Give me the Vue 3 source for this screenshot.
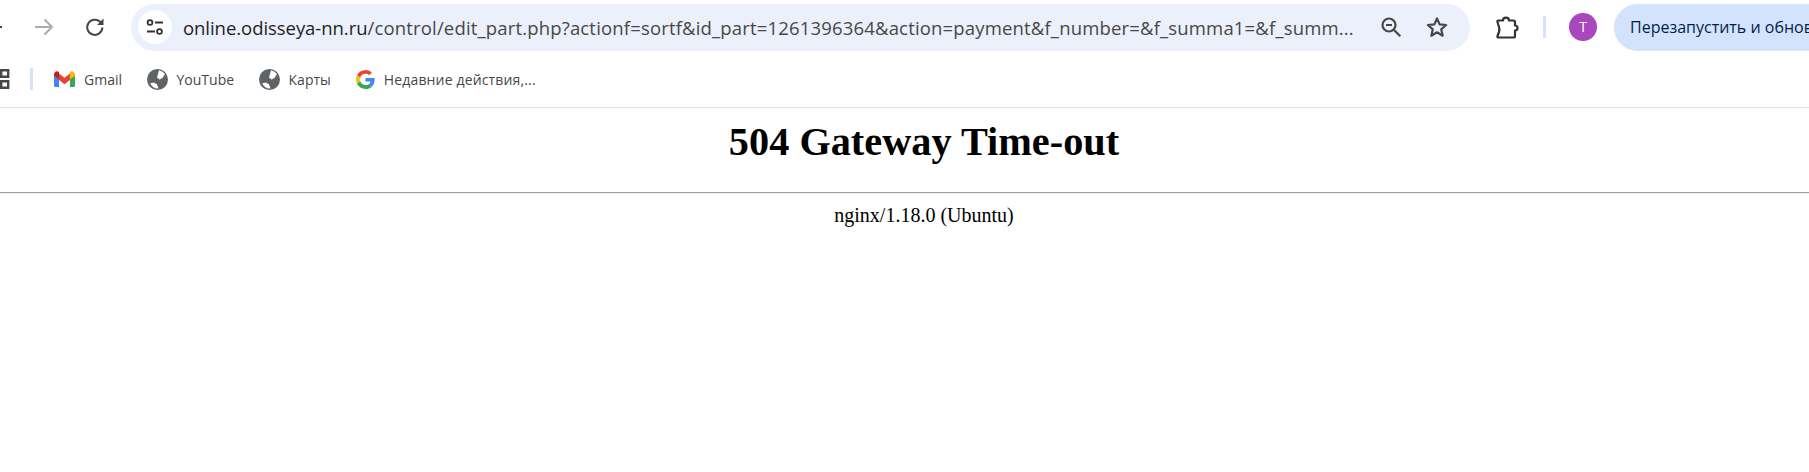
<template>
  <div class="window">
    <header class="toolbar">
      <svg class="back" width="20" height="20" viewBox="0 0 20 20"><path d="M19 10H3M9 4l-6 6 6 6" fill="none" stroke="#474747" stroke-width="2"/></svg>
      <svg class="forward" width="20" height="20" viewBox="0 0 20 20"><path d="M1 10h16M10.500 2.500l7.500 7.500-7.500 7.500" fill="none" stroke="#adadad" stroke-width="2"/></svg>
      <svg class="reload" width="22" height="22" viewBox="0 0 22 22"><path d="M18.400 11.500a7.600 7.600 0 1 1-2.300-5.700l2.300 2.200" fill="none" stroke="#474747" stroke-width="2"/><path d="M19.500 2.500v6.500h-6.500z" fill="#474747"/></svg>
      <div class="omnibox">
        <span class="tune">
          <svg width="20" height="20" viewBox="0 0 20 20" fill="none" stroke="#333" stroke-width="1.800"><circle cx="5" cy="5.500" r="2.400"/><path d="M10 5.500h8M2 14.500h8"/><circle cx="14.500" cy="14.500" r="2.400"/></svg>
        </span>
        <div class="url"><span class="host">online.odisseya-nn.ru</span>/control/edit_part.php?actionf=sortf&amp;id_part=1261396364&amp;action=payment&amp;f_number=&amp;f_summa1=&amp;f_summ...</div>
        <svg class="zoom" width="24" height="24" viewBox="0 0 24 24" fill="none" stroke="#474747" stroke-width="2.200"><circle cx="10" cy="10" r="6.500"/><path d="M7 10h6" stroke-width="2"/><path d="M14.800 14.800l6.500 6.500"/></svg>
        <svg class="star" width="24" height="24" viewBox="0 0 24 24"><path d="M12 3.400l2.600 6 6.500.6-4.900 4.300 1.500 6.400-5.700-3.400-5.700 3.400 1.500-6.400-4.900-4.300 6.500-.6z" fill="none" stroke="#474747" stroke-width="2.200" stroke-linejoin="round"/></svg>
      </div>
      <svg class="puzzle" width="26" height="26" viewBox="0 0 26 26"><path d="M4.500 6.500H9a3 2.800 0 0 1 6 0h4.500q1.500 0 1.500 1.500v3.500a2.500 2.500 0 0 1 0 5V22q0 1.500-1.500 1.500h-15q-1.500 0-1-1.500l1.500-4q.8-2.500 0-5L3.500 8q-.5-1.500 1-1.500z" fill="none" stroke="#333" stroke-width="2.200" stroke-linejoin="round"/></svg>
      <span class="sep"></span>
      <span class="avatar">T</span>
      <button class="relaunch">Перезапустить и обновить</button>
    </header>

    <nav class="bookmarks">
      <svg class="apps" width="10" height="20" viewBox="0 0 10 20"><path d="M1.200 1.200h7v6.600h-7zM1.200 12.200h7v6.600h-7z" fill="none" stroke="#474747" stroke-width="2.400"/></svg>
      <span class="bar-sep"></span>
      <a class="bm gmail">
        <svg width="21" height="16" viewBox="0 0 21 16">
          <path d="M0 3v11.500A1.500 1.500 0 0 0 1.500 16H5V7z" fill="#4285f4"/>
          <path d="M21 3v11.500a1.500 1.500 0 0 1-1.500 1.500H16V7z" fill="#34a853"/>
          <path d="M5 9V2.500l5.500 4.200L16 2.500V9l-5.500 4.200z" fill="#ea4335"/>
          <path d="M0 3.500C0 .8 3-.8 5 1v7.500L0 4.600z" fill="#c5221f"/>
          <path d="M21 3.500C21 .8 18-.8 16 1v7.500l5-3.900z" fill="#fbbc04"/>
        </svg>
        Gmail
      </a>
      <a v-for="b in globes" :key="b" class="bm globe">
        <svg width="21" height="21" viewBox="0 0 21 21"><circle cx="10.500" cy="10.500" r="10.500" fill="#5f6368"/><path d="M12 1.200c2 .5 4.500 1.800 6 3.800l-2.500 4-3 1.500-2.500-2 1-3.500zM3 14.500l4-1 3 2 1.500 4c-3 .5-6.500-1.500-8.500-5z" fill="#fff"/></svg>
        {{ b }}
      </a>
      <a class="bm google">
        <svg width="19" height="19" viewBox="0 0 48 48">
          <path fill="#ea4335" d="M24 9.500c3.500 0 6.700 1.200 9.200 3.600l6.900-6.900C35.900 2.400 30.500 0 24 0 14.600 0 6.500 5.400 2.600 13.200l8 6.200C12.500 13.700 17.800 9.500 24 9.500z"/>
          <path fill="#4285f4" d="M47 24.500c0-1.600-.2-3.100-.4-4.500H24v9h12.900c-.6 3-2.200 5.500-4.800 7.200l7.700 6C44.300 38 47 31.800 47 24.500z"/>
          <path fill="#fbbc05" d="M10.500 28.600c-.5-1.400-.8-3-.8-4.600s.3-3.200.8-4.600l-8-6.200C.9 16.500 0 20.100 0 24s.9 7.500 2.600 10.800z"/>
          <path fill="#34a853" d="M24 48c6.500 0 11.900-2.100 15.900-5.800l-7.700-6c-2.200 1.400-4.900 2.300-8.200 2.300-6.200 0-11.500-4.200-13.400-9.900l-8 6.200C6.500 42.600 14.600 48 24 48z"/>
        </svg>
        <span class="recent">Недавние действия,...</span>
      </a>
    </nav>

    <main class="page">
      <h1>504 Gateway Time-out</h1>
      <hr />
      <p>nginx/1.18.0 (Ubuntu)</p>
    </main>
  </div>
</template>

<script setup>
const globes = ['YouTube', 'Карты']
</script>

<style>
html, body { margin: 0; overflow: hidden; background: #fff; }
</style>

<style scoped>
.window { width: 1809px; height: 472px; overflow: hidden; font-family: "Open Sans", "Noto Sans", sans-serif; }

.toolbar { display: flex; align-items: center; height: 54px; white-space: nowrap; }
.toolbar svg { flex: none; }
.back { margin-left: -17px; }
.forward { margin-left: 31px; }
.reload { margin-left: 30px; }

.omnibox {
  flex: none; display: flex; align-items: center; box-sizing: border-box;
  width: 1339px; height: 47px; margin-left: 25px; padding-left: 7px;
  border-radius: 24px; background: #ebf0fa;
}
.tune {
  flex: none; display: flex; align-items: center; justify-content: center;
  width: 34px; height: 34px; border-radius: 50%; background: #fff;
}
.url {
  flex: none; width: 1176px; margin-left: 11px; font-size: 18.500px; letter-spacing: .17px;
  color: #474747; overflow: hidden;
}
.host { color: #1f1f1f; letter-spacing: -.05px; }
.zoom { margin-left: 20px; }
.star { margin-left: 22px; }

.puzzle { margin-left: 24px; }
.sep { flex: none; width: 3px; height: 22px; margin-left: 23px; background: #d3e3fd; }
.avatar {
  flex: none; width: 28px; height: 28px; margin-left: 23px; border-radius: 50%;
  background: #ab47bc; color: #fff; font-size: 14px; line-height: 28px; text-align: center;
}
.relaunch {
  flex: none; width: 290px; height: 47px; margin-left: 17px; padding: 0 0 0 16px; border: 0;
  border-radius: 24px 0 0 24px; background: #d3e3fd; color: #041e49;
  font: 16px "Open Sans", sans-serif; text-align: left;
}

.bookmarks {
  display: flex; align-items: center; box-sizing: border-box; height: 54px;
  padding-bottom: 3px; border-bottom: 1px solid #e3e3e3; font-size: 14px; color: #474747;
}
.apps { flex: none; }
.bar-sep { flex: none; width: 3px; height: 22px; margin-left: 20px; background: #d3e3fd; }
.bm { display: flex; align-items: center; flex: none; gap: 9px; }
.gmail { margin-left: 21px; }
.globe { margin-left: 24.500px; }
.google { margin-left: 25px; gap: 9px; }
.recent { letter-spacing: .15px; }

.page { font-family: "Liberation Serif", serif; color: #000; }
h1 {
  width: 1848px; margin: 11px 0 0; font-size: 40.300px; line-height: 46px; font-weight: bold; text-align: center;
}
hr { height: 0; margin: 27px 0 0; border: 0; border-top: 1px solid #a0a0a0; border-bottom: 1px solid #eee; }
p { width: 1848px; margin: 10px 0 0; font-size: 20px; line-height: 23px; text-align: center; }
</style>
